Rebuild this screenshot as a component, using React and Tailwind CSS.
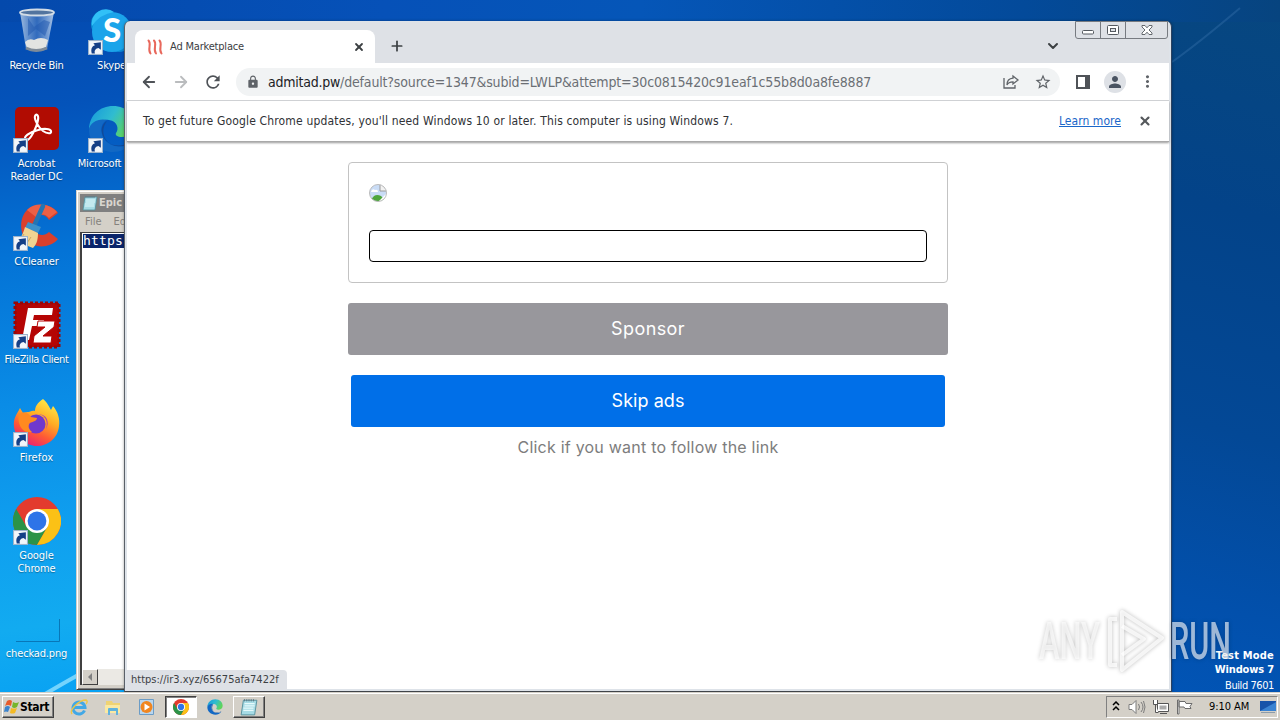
import React from 'react'
import { ArrowLeft, ArrowRight, ChevronDown, Plus, X } from 'lucide-react'
import { MdLock, MdMoreVert, MdPerson, MdRefresh, MdStarBorder } from 'react-icons/md'

const RecycleBinIcon = () => (
  <svg viewBox="0 0 48 48" className="w-12 h-12">
    <defs>
      <linearGradient id="bin" x1="0" x2="1">
        <stop offset="0" stopColor="#b9cfe8" stopOpacity=".85" />
        <stop offset=".5" stopColor="#4f7fc4" stopOpacity=".6" />
        <stop offset="1" stopColor="#c8daf0" stopOpacity=".85" />
      </linearGradient>
    </defs>
    <path d="M7 5h34l-7 37q-10 5-21 0z" fill="url(#bin)" />
    <path d="M15 11l6 9 10-7 6 2-5 14-9-7-8 7z" fill="#245bb0" opacity=".55" />
    <path d="M12 35q4-4 9-2 7-4 14 0l-2 7q-9 5-19 1z" fill="#e2e4e2" />
    <path d="M13 41q10 5 21 0" stroke="#7e8b98" strokeWidth="3" fill="none" />
    <ellipse cx="24" cy="5.500" rx="17" ry="3" fill="#52749f" stroke="#d2dce6" strokeWidth="1.800" />
  </svg>
)

const SkypeIcon = () => (
  <svg viewBox="0 0 48 48" className="w-12 h-12">
    <circle cx="17" cy="17" r="14" fill="#0b8fd6" />
    <circle cx="31" cy="32" r="13" fill="#0c88d4" />
    <circle cx="24" cy="25" r="20" fill="#1ba4ea" />
    <path d="M4 19A14 14 0 0 1 26 5Q12 7 4 19" fill="#31c0f7" />
    <text x="24" y="35" textAnchor="middle" fontFamily="Lato" fontWeight="900" fontSize="33" fill="#fff">S</text>
  </svg>
)

const AcrobatIcon = () => (
  <svg viewBox="0 0 48 48" className="w-12 h-12">
    <rect x="2" y="2" width="44" height="43" rx="5" fill="#b10c02" />
    <path
      d="M13 35C9 32 17 27 25 25c7-2 12-1 13 1 1 3-4 3-8 0-5-4-9-12-8-15 1-3 4-1 3 4-1 6-8 22-12 20z"
      fill="none" stroke="#fff" strokeWidth="2.100"
    />
  </svg>
)

const EdgeIcon = ({ className, id }) => (
  <svg viewBox="0 0 48 48" className={className}>
    <defs>
      <linearGradient id={id} x1="0" x2="1" y2=".4">
        <stop offset="0" stopColor="#1597dc" />
        <stop offset=".55" stopColor="#30bcd0" />
        <stop offset="1" stopColor="#5fd45c" />
      </linearGradient>
    </defs>
    <path d="M1 25C1 10 12 1 25 1c14 0 22 10 22 19 0 8-6 12-13 12-5 0-7-2-6-4 3-3 2-12-7-13C11 14 2 18 1 25z" fill={`url(#${id})`} />
    <path d="M1 25c1-8 10-12 18-10-6 3-7 10-4 17 4 8 14 11 22 9 2-1 4-2 6-3-4 6-11 9-18 9C12 47 1 38 1 25z" fill="#1268c4" />
    <path d="M19 16c-6 4-7 10-3 17 5 8 16 10 27 4-4 4-10 5-14 4-12-1-18-15-10-25z" fill="#124a98" />
  </svg>
)

const CCleanerIcon = () => (
  <svg viewBox="0 0 48 48" className="w-12 h-12">
    <path d="M45 10C39 1 24-1 15 6 6 14 6 30 14 38c8 8 24 7 31-2l-9-7c-4 4-10 4-13 0-4-5-3-13 2-16 4-2 8-1 11 4z" fill="#d9402c" />
    <path d="M14 7c8-8 22-7 30 2l-8 6c-4-5-9-4-13-1z" fill="#ec6045" />
    <path d="M30 3l-9 20" stroke="#2475b3" strokeWidth="4.500" strokeLinecap="round" />
    <path d="M15 19l13 5-3 6-13-5z" fill="#3b91ca" />
    <path d="M12 24l13 6c0 8-2 12-5 15L2 38c6-2 8-7 10-14z" fill="#f1d491" />
    <path d="M11 31L6 39m12-5l-6 9" stroke="#cfa55e" />
  </svg>
)

const FileZillaIcon = () => (
  <svg viewBox="0 0 48 48" className="w-12 h-12">
    <rect x="2" y="2" width="44" height="44" fill="#b50504" stroke="#970707" strokeWidth="3" strokeDasharray="3 2" />
    <path d="M15 7h25l-1 7H21l-1 5h11l-1 6H19l-3 14H9z" fill="#fff" />
    <path d="M25 20h17l-1 6-11 9h9l-1 7H20l1-7 11-9h-8z" fill="#fff" stroke="#b50504" />
  </svg>
)

const FirefoxIcon = () => (
  <svg viewBox="0 0 48 48" className="w-12 h-12">
    <defs>
      <linearGradient id="fx" x1=".8" y1="0" x2=".3" y2="1">
        <stop offset="0" stopColor="#fff04a" />
        <stop offset=".4" stopColor="#ffac24" />
        <stop offset=".7" stopColor="#ff5a35" />
        <stop offset="1" stopColor="#e81d75" />
      </linearGradient>
    </defs>
    <path d="M30 0c5 4 6 8 8 11l2-4c5 6 7 13 6 20-1 12-11 20-22 20S2 38 1 28C0 19 4 15 7 9l3 5c2-1 4-1 6-1 0 0 3-2 6-1 0-4 2-8 8-12z" fill="url(#fx)" />
    <circle cx="23" cy="25" r="9.500" fill="#6f38ce" />
    <path d="M23 15c8 0 13 6 10 15 4-7 1-16-10-15z" fill="#a839c5" />
    <path d="M6 15c5-3 10-1 12 3l6 1c0 3-5 4-7 5-2 2-2 6 2 9C8 35 4 23 6 15z" fill="#ff8a20" />
  </svg>
)

const ChromeIcon = ({ className }) => (
  <svg viewBox="0 0 48 48" className={className}>
    <circle cx="24" cy="24" r="24" fill="#e33b2e" />
    <path d="M3.200 12A24 24 0 0 0 24 48l10.400-18L24 24 13.600 30z" fill="#2b9348" />
    <path d="M24 12h20.800A24 24 0 0 1 24 48l10.400-18z" fill="#fbc116" />
    <circle cx="24" cy="24" r="12" fill="#fff" />
    <circle cx="24" cy="24" r="9.400" fill="#2e74e8" />
  </svg>
)

const ImageFileIcon = () => (
  <svg viewBox="0 0 48 48" className="w-12 h-12">
    <path d="M46.500 24v22.500H3" fill="none" stroke="#0877b8" />
  </svg>
)

const ShortcutArrow = () => (
  <svg viewBox="0 0 14 14" className="absolute left-0 bottom-0 w-[15px] h-[15px]">
    <rect x=".5" y=".5" width="13" height="13" fill="#f3f6fa" stroke="#9cb3cc" />
    <path d="M3.500 12.500C2.500 8.500 3.500 6 6.500 5L5 3l7-.8v7L9.800 7.500C7.500 8 5.500 9.500 6.500 12.500z" fill="#153f86" />
  </svg>
)

const NotepadIcon = ({ className }) => (
  <svg viewBox="0 0 16 16" className={className}>
    <path d="M3 2h12l-2 13H1z" fill="#a6dbe5" stroke="#528d9b" strokeWidth=".8" />
    <path d="M4 5h9M4 7h9M3 9h9M3 11h9" stroke="#e6fafc" strokeWidth=".9" />
    <path d="M4 1v2m2-2v2m2-2v2m2-2v2m2-2v2" stroke="#607580" strokeWidth=".8" />
  </svg>
)

const columns = [
  [
    { lines: ['Recycle Bin'], icon: <RecycleBinIcon />, tracking: 'tracking-[-0.27px]' },
    { lines: ['Acrobat', 'Reader DC'], icon: <AcrobatIcon />, shortcut: true, tracking: 'tracking-[-0.07px]' },
    { lines: ['CCleaner'], icon: <CCleanerIcon />, shortcut: true, tracking: 'tracking-[-0.1px]' },
    { lines: ['FileZilla Client'], icon: <FileZillaIcon />, shortcut: true, tracking: 'tracking-[-0.34px]' },
    { lines: ['Firefox'], icon: <FirefoxIcon />, shortcut: true, tracking: 'tracking-[0.1px]' },
    { lines: ['Google', 'Chrome'], icon: <ChromeIcon className="w-12 h-12" />, shortcut: true, tracking: 'tracking-[-0.1px]' },
    { lines: ['checkad.png'], icon: <ImageFileIcon />, tracking: 'tracking-[-0.16px]' },
  ],
  [
    { lines: ['Skype'], icon: <SkypeIcon />, shortcut: true, tracking: 'tracking-[-0.2px]' },
    {
      lines: ['Microsoft'],
      icon: <EdgeIcon className="w-12 h-12" id="edge-desktop" />,
      shortcut: true,
      tracking: 'tracking-[-0.15px] relative right-3',
    },
  ],
]

const DesktopIcons = () => (
  <div className="absolute left-[-1px] top-[7px] flex">
    {columns.map((column, i) => (
      <div key={i} className="flex flex-col w-[75px] shrink-0">
        {column.map((item) => (
          <div key={item.lines[0]} className="h-[98px] flex flex-col items-center">
            <div className="relative w-12 h-12 mb-1">
              {item.icon}
              {item.shortcut && <ShortcutArrow />}
            </div>
            {item.lines.map((line) => (
              <span
                key={line}
                className={`text-[11px] leading-[13px] text-white whitespace-nowrap [text-shadow:0_1px_1px_rgba(0,0,0,0.35)] ${item.tracking}`}
              >
                {line}
              </span>
            ))}
          </div>
        ))}
      </div>
    ))}
  </div>
)

const Notepad = () => (
  <div className="absolute left-[76px] top-[190px] w-[400px] h-[500px] flex flex-col px-[3px] pt-[3px] pb-1 bg-[#d4d0c8] border border-t-[#e8e5df] border-l-[#d4d0c8] border-[#404040] shadow-[inset_1px_1px_0_white,inset_-1px_-1px_0_#808080]">
    <div className="h-[18px] shrink-0 flex items-center gap-px pl-0.5 bg-[#808080]">
      <NotepadIcon className="w-4 h-4" />
      <span className="text-[11px] font-bold text-[#d9d6cf] whitespace-nowrap">Epic - Notepad</span>
    </div>
    <div className="h-5 shrink-0 flex items-center gap-3 pl-[5px] text-[11px] text-[#85827c]">
      <span>File</span>
      <span>Edit</span>
    </div>
    <div className="flex-1 flex flex-col bg-white border-t border-l-2 border-[#404040]">
      <div className="flex-1 pt-px pl-px">
        <span className="block w-max h-[14px] bg-[#0a246a] text-white font-['DejaVu_Sans_Mono'] text-[13px] leading-[13px] tracking-[0.2px]">https://</span>
      </div>
      <div className="h-4 flex bg-[#ebe9e4]">
        <div className="w-4 h-4 flex items-center justify-center bg-[#d4d0c8] border border-t-white border-l-white border-[#404040]">
          <div className="border-y-4 border-y-transparent border-r-4 border-r-[#808080]"></div>
        </div>
      </div>
    </div>
  </div>
)

const WindowControls = () => (
  <div className="absolute right-px top-[-1px] flex h-[18px] border border-[#777b81] rounded-b-[3px] divide-x divide-[#777b81]">
    <div className="w-[25px] flex items-center justify-center">
      <svg viewBox="0 0 12 10" className="w-3 h-2.5"><rect x=".5" y="5.500" width="11" height="3.500" rx="1" fill="#fff" stroke="#555a60" /></svg>
    </div>
    <div className="w-[25px] flex items-center justify-center">
      <svg viewBox="0 0 12 10" className="w-3 h-2.5">
        <rect x=".5" y=".5" width="11" height="9" rx="1" fill="#fff" stroke="#555a60" />
        <rect x="3.500" y="3.500" width="5" height="3" fill="#dee1e6" stroke="#555a60" />
      </svg>
    </div>
    <div className="w-[41px] flex items-center justify-center">
      <svg viewBox="0 0 12 10" className="w-3 h-2.5">
        <path d="M1 .5h3l2 2.300L8 .5h3v1.500L8 5l3 3v1.500H8L6 7.200 4 9.500H1V8l3-3-3-3z" fill="#fff" stroke="#555a60" strokeWidth=".9" />
      </svg>
    </div>
  </div>
)

const TabStrip = () => (
  <div className="relative h-[41px] shrink-0 flex items-end bg-[#dee1e6] rounded-t">
    <div className="ml-2 w-[240px] h-[33px] flex items-center rounded-t-lg bg-white pl-3 pr-2.5">
      <svg viewBox="0 0 16 16" className="w-4 h-4" fill="none" stroke="#e8685c" strokeWidth="2" strokeLinecap="round">
        <path d="M1.500 1.500C5 5 0 10 3.500 14.500M7 1.500c3.500 3.500-1.500 8.500 2 13M12.500 1.500c3.500 3.500-1.500 8.500 2 13" />
      </svg>
      <span className="ml-[7px] pt-px text-[11px] tracking-[-0.19px] text-[#3c4043]">Ad Marketplace</span>
      <X className="ml-auto w-3 h-3 text-[#3c4043]" strokeWidth={3.6} />
    </div>
    <Plus className="ml-[14px] mb-[9px] w-4 h-4 text-[#3c4043]" strokeWidth={2.6} />
    <ChevronDown className="ml-auto mr-[108px] mb-[9px] w-4 h-4 text-[#3c4043]" strokeWidth={3} />
    <WindowControls />
  </div>
)

const Toolbar = () => (
  <div className="h-[38px] shrink-0 flex items-center bg-white border-b border-[#d5d7da] pl-[13px] pr-[11px] text-[#5f6368]">
    <ArrowLeft className="w-[18px] h-[18px] text-[#4f5358]" strokeWidth={2.4} />
    <ArrowRight className="ml-[14px] w-[18px] h-[18px] text-[#babcbe]" strokeWidth={2.4} />
    <MdRefresh className="ml-[13px] w-5 h-5 text-[#4f5358]" />
    <div className="ml-[13px] w-[824px] h-7 flex items-center rounded-full bg-[#f1f3f4] pl-2.5 pr-2">
      <MdLock className="w-3.5 h-3.5" />
      <span className="ml-2 text-[14px] leading-5 whitespace-nowrap text-[#6b6f74]">
        <span className="text-[#202124] tracking-[-0.24px]">admitad.pw</span>
        <span className="tracking-[-0.16px]">/default?source=1347&amp;subid=LWLP&amp;attempt=30c0815420c91eaf1c55b8d0a8fe8887</span>
      </span>
      <svg viewBox="0 0 16 16" className="ml-auto w-4 h-4" fill="none" stroke="currentColor" strokeWidth="1.300">
        <path d="M1 4v10h11v-3" />
        <path d="M10 2l5 4-5 4V7.800C7 7.800 5 8.500 4 11c0-4 2-6.500 6-6.800z" />
      </svg>
      <MdStarBorder className="ml-[15px] w-[18px] h-[18px]" />
    </div>
    <svg viewBox="0 0 14 14" className="ml-4 w-3.5 h-3.5">
      <path d="M1 1h12v12H1z" fill="#fff" stroke="#4f5358" strokeWidth="2" />
      <path d="M9 1h4v12H9z" fill="#4f5358" />
    </svg>
    <div className="ml-3.5 w-[22px] h-[22px] rounded-full bg-[#dee1e6] flex items-center justify-center">
      <MdPerson className="w-[18px] h-[18px] text-[#4a5462]" />
    </div>
    <MdMoreVert className="ml-3 w-[19px] h-[19px]" />
  </div>
)

const InfoBar = () => (
  <div className="relative h-[41px] shrink-0 flex items-center bg-white border-b border-[#a9a9a9] shadow-[0_1px_2px_rgba(0,0,0,0.4)] pl-4 pr-[17px] text-[12px]">
    <span className="tracking-[0.16px] text-[#303236] whitespace-nowrap">
      To get future Google Chrome updates, you'll need Windows 10 or later. This computer is using Windows 7.
    </span>
    <span className="ml-auto text-[#1a66c9] underline tracking-[0.05px]">Learn more</span>
    <X className="ml-[17px] w-[14px] h-[14px] text-[#55585c]" strokeWidth={3.6} />
  </div>
)

const AdPage = () => (
  <div className="flex-1 flex flex-col items-center bg-white pt-5 font-['Inter',sans-serif]">
    <div className="w-[600px] h-[121px] rounded border border-[#c3c3c3] px-5 pt-[21px]">
      <svg viewBox="0 0 18 18" className="w-[18px] h-[18px]">
        <defs>
          <clipPath id="round"><circle cx="9" cy="9" r="8.500" /></clipPath>
        </defs>
        <g clipPath="url(#round)">
          <path d="M0 0h18v18H0z" fill="#c9dcf6" />
          <path d="M11 0h7v7h-7z" fill="#f2f2f2" stroke="#9a9a9a" />
          <path d="M2 8q1-4 4-2 3-1 3 2z" fill="#fff" />
          <path d="M0 18l5-6q3-2 7 0l3 3v3z" fill="#4ea63d" />
          <path d="M9 18l9-9v9z" fill="#fff" />
        </g>
        <circle cx="9" cy="9" r="8.500" fill="none" stroke="#bbb" />
      </svg>
      <div className="mt-7 h-8 rounded border border-black bg-white"></div>
    </div>
    <button className="mt-5 w-[600px] h-[52px] pb-0.5 rounded-[3px] bg-[#98979c] text-white text-[18px] font-normal tracking-[0.4px]">Sponsor</button>
    <button className="mt-5 w-[594px] h-[52px] pb-0.5 rounded-[3px] bg-[#006fe8] text-white text-[18px] font-normal tracking-[0.05px]">Skip ads</button>
    <p className="mt-2 text-[16px] leading-6 tracking-[0.22px] text-[#7d7d7d]">Click if you want to follow the link</p>
  </div>
)

const Browser = () => (
  <div className="absolute left-[124px] top-[21px] w-[1048px] h-[671px] flex flex-col bg-[#dee3e9] rounded-t-md border-l border-r border-b border-l-[#5a6068] border-r-[#2c4260] border-b-[#40444a] shadow-[0_0_3px_rgba(0,0,0,0.35)]">
    <div className="flex-1 flex flex-col mx-[2px] mb-[2px] mt-px min-h-0">
      <TabStrip />
      <Toolbar />
      <InfoBar />
      <AdPage />
    </div>
    <div className="absolute left-px bottom-px h-5 w-[161px] pl-[5px] rounded-tr bg-[#dee1e6] text-[11px] leading-5 text-[#3c4043] whitespace-nowrap">
      https://ir3.xyz/65675afa7422f
    </div>
  </div>
)

const Watermark = () => (
  <svg viewBox="0 0 200 70" className="absolute left-[1035px] top-[606px] w-[200px] h-[70px] overflow-visible drop-shadow-[0_0_2px_rgba(0,0,0,0.35)]">
    <g fill="#fff" fillOpacity=".62" fontFamily="Roboto" fontSize="51" fontWeight="500">
      <text x="4" y="53" textLength="61" lengthAdjust="spacingAndGlyphs">ANY</text>
      <text x="135" y="53" textLength="61" lengthAdjust="spacingAndGlyphs">RUN</text>
    </g>
    <g fill="none" stroke="#fff" strokeOpacity=".75" strokeWidth="4" strokeLinejoin="round">
      <path d="M87 6l40 26-40 32z" />
      <path d="M87 20l22 13-22 16" />
      <path d="M82 13h-7v46h7" />
    </g>
  </svg>
)

const quickLaunch = [
  {
    name: 'ie',
    icon: (
      <svg viewBox="0 0 18 18" className="w-[18px] h-[18px]" fill="none">
        <path d="M14.500 12.500A6 6 0 1 1 15 9.500H4" stroke="#42a8e6" strokeWidth="3" />
        <path d="M2 16C-1 12 9 2 16 2c2 1 1 3 0 4" stroke="#efc645" strokeWidth="1.400" />
      </svg>
    ),
  },
  {
    name: 'explorer',
    icon: (
      <svg viewBox="0 0 18 18" className="w-[18px] h-[18px]">
        <path d="M2 3h6l1 2h7v10H2z" fill="#efd373" />
        <path d="M1 7h15v8H1z" fill="#fae9a2" />
        <path d="M4 17v-6q0-1 1-1h8q1 0 1 1v6h-2v-4H6v4z" fill="#61b3dd" />
      </svg>
    ),
  },
  {
    name: 'player',
    icon: (
      <svg viewBox="0 0 18 18" className="w-[18px] h-[18px]">
        <path d="M1.500 1.500h14v15h-14z" fill="#b9d6ee" stroke="#6b9cc6" />
        <circle cx="8.500" cy="9" r="6" fill="#f08620" />
        <path d="M6.500 5.500v7l5.500-3.500z" fill="#fff" />
      </svg>
    ),
  },
  { name: 'chrome', active: true, icon: <ChromeIcon className="w-4 h-4" /> },
  { name: 'edge', icon: <EdgeIcon className="w-4 h-4" id="edge-task" /> },
  { name: 'notepad', open: true, icon: <NotepadIcon className="w-[18px] h-[18px]" /> },
]

const Taskbar = () => (
  <div className="absolute left-0 bottom-0 w-full h-7 flex items-start bg-[#d4d0c8] border-t border-[#d4d0c8] shadow-[inset_0_1px_0_white] pt-[3px] pl-0.5 pr-0.5">
    <div className="w-[52px] h-[22px] flex items-center border border-t-white border-l-white border-[#404040] shadow-[inset_-1px_-1px_0_#808080] pl-px">
      <svg viewBox="0 0 16 16" className="w-4 h-4">
        <path d="M3 2q3-2 5 0L7 7Q4 5 1 7z" fill="#e75b2b" />
        <path d="M9 3q3 2 6 0l-2 5q-3 2-5 0z" fill="#76b52c" />
        <path d="M1 8q3-2 5 0l-2 5q-2-1-4 0z" fill="#3b83cd" />
        <path d="M7 9q3 1 6 0l-2 5q-3 1-5 0z" fill="#f4ba23" />
      </svg>
      <span className="text-[12px] font-bold tracking-[-0.35px]">Start</span>
    </div>
    <div className="ml-[9px] flex items-center gap-0.5">
      {quickLaunch.map((item) => (
        <div
          key={item.name}
          className={`w-8 h-[22px] flex items-center justify-center ${
            item.active
              ? 'bg-white border border-t-[#404040] border-l-[#404040] border-white shadow-[inset_1px_1px_0_#808080]'
              : item.open
                ? 'border border-t-white border-l-white border-[#404040] shadow-[inset_-1px_-1px_0_#808080]'
                : ''
          }`}
        >
          {item.icon}
        </div>
      ))}
    </div>
    <div className="ml-auto w-[172px] h-[22px] flex items-center border border-t-[#808080] border-l-[#808080] border-white pl-[5px] pr-px">
      <svg viewBox="0 0 8 10" className="w-2 h-2.5 mb-0.5" fill="none" stroke="#000" strokeWidth="1.500"><path d="M1 4l3-3 3 3M1 9l3-3 3 3" /></svg>
      <svg viewBox="0 0 18 16" className="ml-2 w-[18px] h-4" fill="#fff" stroke="#7c7c7c">
        <path d="M1 5.500h3l4-4v13l-4-4H1z" />
        <path d="M10.500 5q2 3 0 6M13 3q4 5 0 10M15.500 2q3 6 0 12" fill="none" />
      </svg>
      <svg viewBox="0 0 18 16" className="ml-[6px] w-[18px] h-4" fill="#fff" stroke="#555">
        <path d="M5.500 4.500h11v8h-11zM8 14.500h7" />
        <path d="M7.500 6.500h7v4h-7z" fill="#aaa" stroke="none" />
        <path d="M1.500 1v4.500h4V1M3.500 5.500v8h3" />
      </svg>
      <svg viewBox="0 0 17 16" className="ml-[6px] w-[17px] h-4" fill="#fff" stroke="#6c6c6c">
        <path d="M1.500 1h1.500v14H1.500zM3 2.500h6l1 2h6l-2 3 1 2H9l-1-1.500H3z" />
      </svg>
      <span className="ml-4 pt-px text-[11px] tracking-[-0.05px] whitespace-nowrap text-black">9:10 AM</span>
      <svg viewBox="0 0 16 14" className="ml-auto w-4 h-3.5">
        <path d="M0 1h16v10H0z" fill="#1753a9" />
        <path d="M0 11L16 2v9z" fill="#3a83d2" />
        <path d="M1 12h14v1H1z" fill="#8c9cab" />
      </svg>
    </div>
  </div>
)

export default function App() {
  return (
    <div className="relative w-[1280px] h-[720px] overflow-hidden bg-[#0452b2] font-['DejaVu_Sans_Condensed','Noto_Sans',sans-serif]">
      <div className="flex h-full">
        <div className="w-[640px] bg-[linear-gradient(172deg,#044aaf_0%,#0453ba_14%,#0473d6_32%,#0a8ce6_50%,#0f9fef_66%,#12abf0_78%,#069ff4_90%,#22b5f2_100%)]"></div>
        <div className="flex-1 bg-[linear-gradient(195deg,#07477f_0%,#034389_25%,#034896_50%,#0250ac_70%,#0157bb_88%,#0052b5_100%)]"></div>
      </div>
      {/* fade the top strip from the bright blue to the navy side */}
      <div className="absolute left-0 top-0 w-full h-[22px] bg-[linear-gradient(90deg,#0449ac_0%,#0651b8_30%,#0556b8_50%,#034a9a_80%,#07447f_100%)]"></div>
      <svg viewBox="0 0 1280 720" className="absolute inset-0 w-[1280px] h-[720px]" fill="none">
        <path d="M40 697Q62 684 80 674" stroke="#8fe0ff" strokeWidth="4" strokeOpacity=".8" />
        <path d="M1172 62Q1200 42 1240 8" stroke="#4a80b8" strokeWidth="2" strokeOpacity=".3" />
      </svg>
      <DesktopIcons />
      <Notepad />
      <div className="absolute right-[6px] top-[649px] flex flex-col items-end text-[11px] leading-[14px] text-white">
        <span className="font-bold tracking-[0.2px]">Test Mode</span>
        <span className="font-bold tracking-[-0.15px]">Windows 7</span>
        <span className="mt-[2px] tracking-[-0.42px]">Build 7601</span>
      </div>
      <Browser />
      <Watermark />
      <Taskbar />
    </div>
  )
}
